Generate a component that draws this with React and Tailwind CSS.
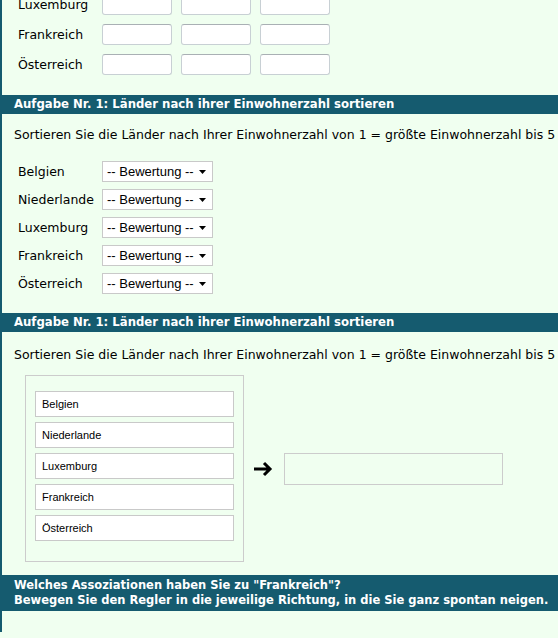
import React from 'react';

const countries = ['Belgien', 'Niederlande', 'Luxemburg', 'Frankreich', 'Österreich'];

function Header({ children }) {
  return (
    <div className="bg-[#155b6f] px-3 py-[3px] text-[11.7px] font-bold leading-[13px] text-white">
      {children}
    </div>
  );
}

function TextInput() {
  return <div className="h-[21px] w-[70px] rounded-[3px] border border-[#c8d0d4] border-t-[#a9b0b4] bg-white" />;
}

function RatingSelect() {
  return (
    <div className="flex h-[21px] w-[111px] items-center justify-between border border-[#c9c9c9] bg-white pl-[4px] pr-[6px] font-['Liberation_Sans',Arial,sans-serif] text-[13px] text-black">
      <span>-- Bewertung --</span>
      <svg width="7" height="4" viewBox="0 0 7 4">
        <path d="M0 0h7L3.5 4z" fill="#000" />
      </svg>
    </div>
  );
}

export default function App() {
  return (
    <div className="h-[638px] w-[558px] overflow-hidden bg-[#f0fff0] font-['DejaVu_Sans',Verdana,sans-serif] text-[12.5px] leading-[16px] text-black">
      <div className="h-full w-[600px] border-l-2 border-[#155b6f]">
        {/* Texteingaben */}
        <div className="-mt-[6px] flex flex-col gap-[9px] pl-4">
          {['Luxemburg', 'Frankreich', 'Österreich'].map((c) => (
            <div key={c} className="flex h-[21px] items-center">
              <span className="w-[84px]">{c}</span>
              <div className="flex gap-[9px]">
                <TextInput />
                <TextInput />
                <TextInput />
              </div>
            </div>
          ))}
        </div>

        <div className="mt-[20px]">
          <Header>Aufgabe Nr. 1: Länder nach ihrer Einwohnerzahl sortieren</Header>
        </div>
        <p className="mt-[13px] h-[16px] pl-3 text-[12.5px] whitespace-nowrap">
          Sortieren Sie die Länder nach Ihrer Einwohnerzahl von 1 = größte Einwohnerzahl bis 5
        </p>

        {/* Auswahllisten */}
        <div className="mt-[18px] flex flex-col gap-[7px] pl-4">
          {countries.map((c) => (
            <div key={c} className="flex h-[21px] items-center">
              <span className="w-[84px]">{c}</span>
              <RatingSelect />
            </div>
          ))}
        </div>

        <div className="mt-[19px]">
          <Header>Aufgabe Nr. 1: Länder nach ihrer Einwohnerzahl sortieren</Header>
        </div>
        <p className="mt-[15px] h-[16px] pl-3 text-[12.5px] whitespace-nowrap">
          Sortieren Sie die Länder nach Ihrer Einwohnerzahl von 1 = größte Einwohnerzahl bis 5
        </p>

        {/* Drag & Drop */}
        <div className="mt-[12px] ml-[23px] flex items-center">
          <div className="flex h-[187px] w-[219px] flex-col gap-[5px] border border-[#cccccc] px-[9px] pt-[15px]">
            {countries.map((c) => (
              <div
                key={c}
                className="flex h-[26px] items-center border border-[#c9c9c9] bg-white pl-[6px] font-['Liberation_Sans',Arial,sans-serif] text-[11px] leading-[13px]"
              >
                {c}
              </div>
            ))}
          </div>
          <svg className="ml-[10px]" width="19" height="16" viewBox="0 0 19 16">
            <path d="M0 8h16M10 2l6 6-6 6" fill="none" stroke="#000" strokeWidth="3" />
          </svg>
          <div className="ml-[11px] h-[32px] w-[219px] border border-[#cccccc]" />
        </div>

        <div className="mt-[13px] bg-[#155b6f] px-3 py-[3px] text-[11.5px] font-bold leading-[15px] text-white">
          Welches Assoziationen haben Sie zu "Frankreich"?
          <br />
          Bewegen Sie den Regler in die jeweilige Richtung, in die Sie ganz spontan neigen.
        </div>
      </div>
    </div>
  );
}
